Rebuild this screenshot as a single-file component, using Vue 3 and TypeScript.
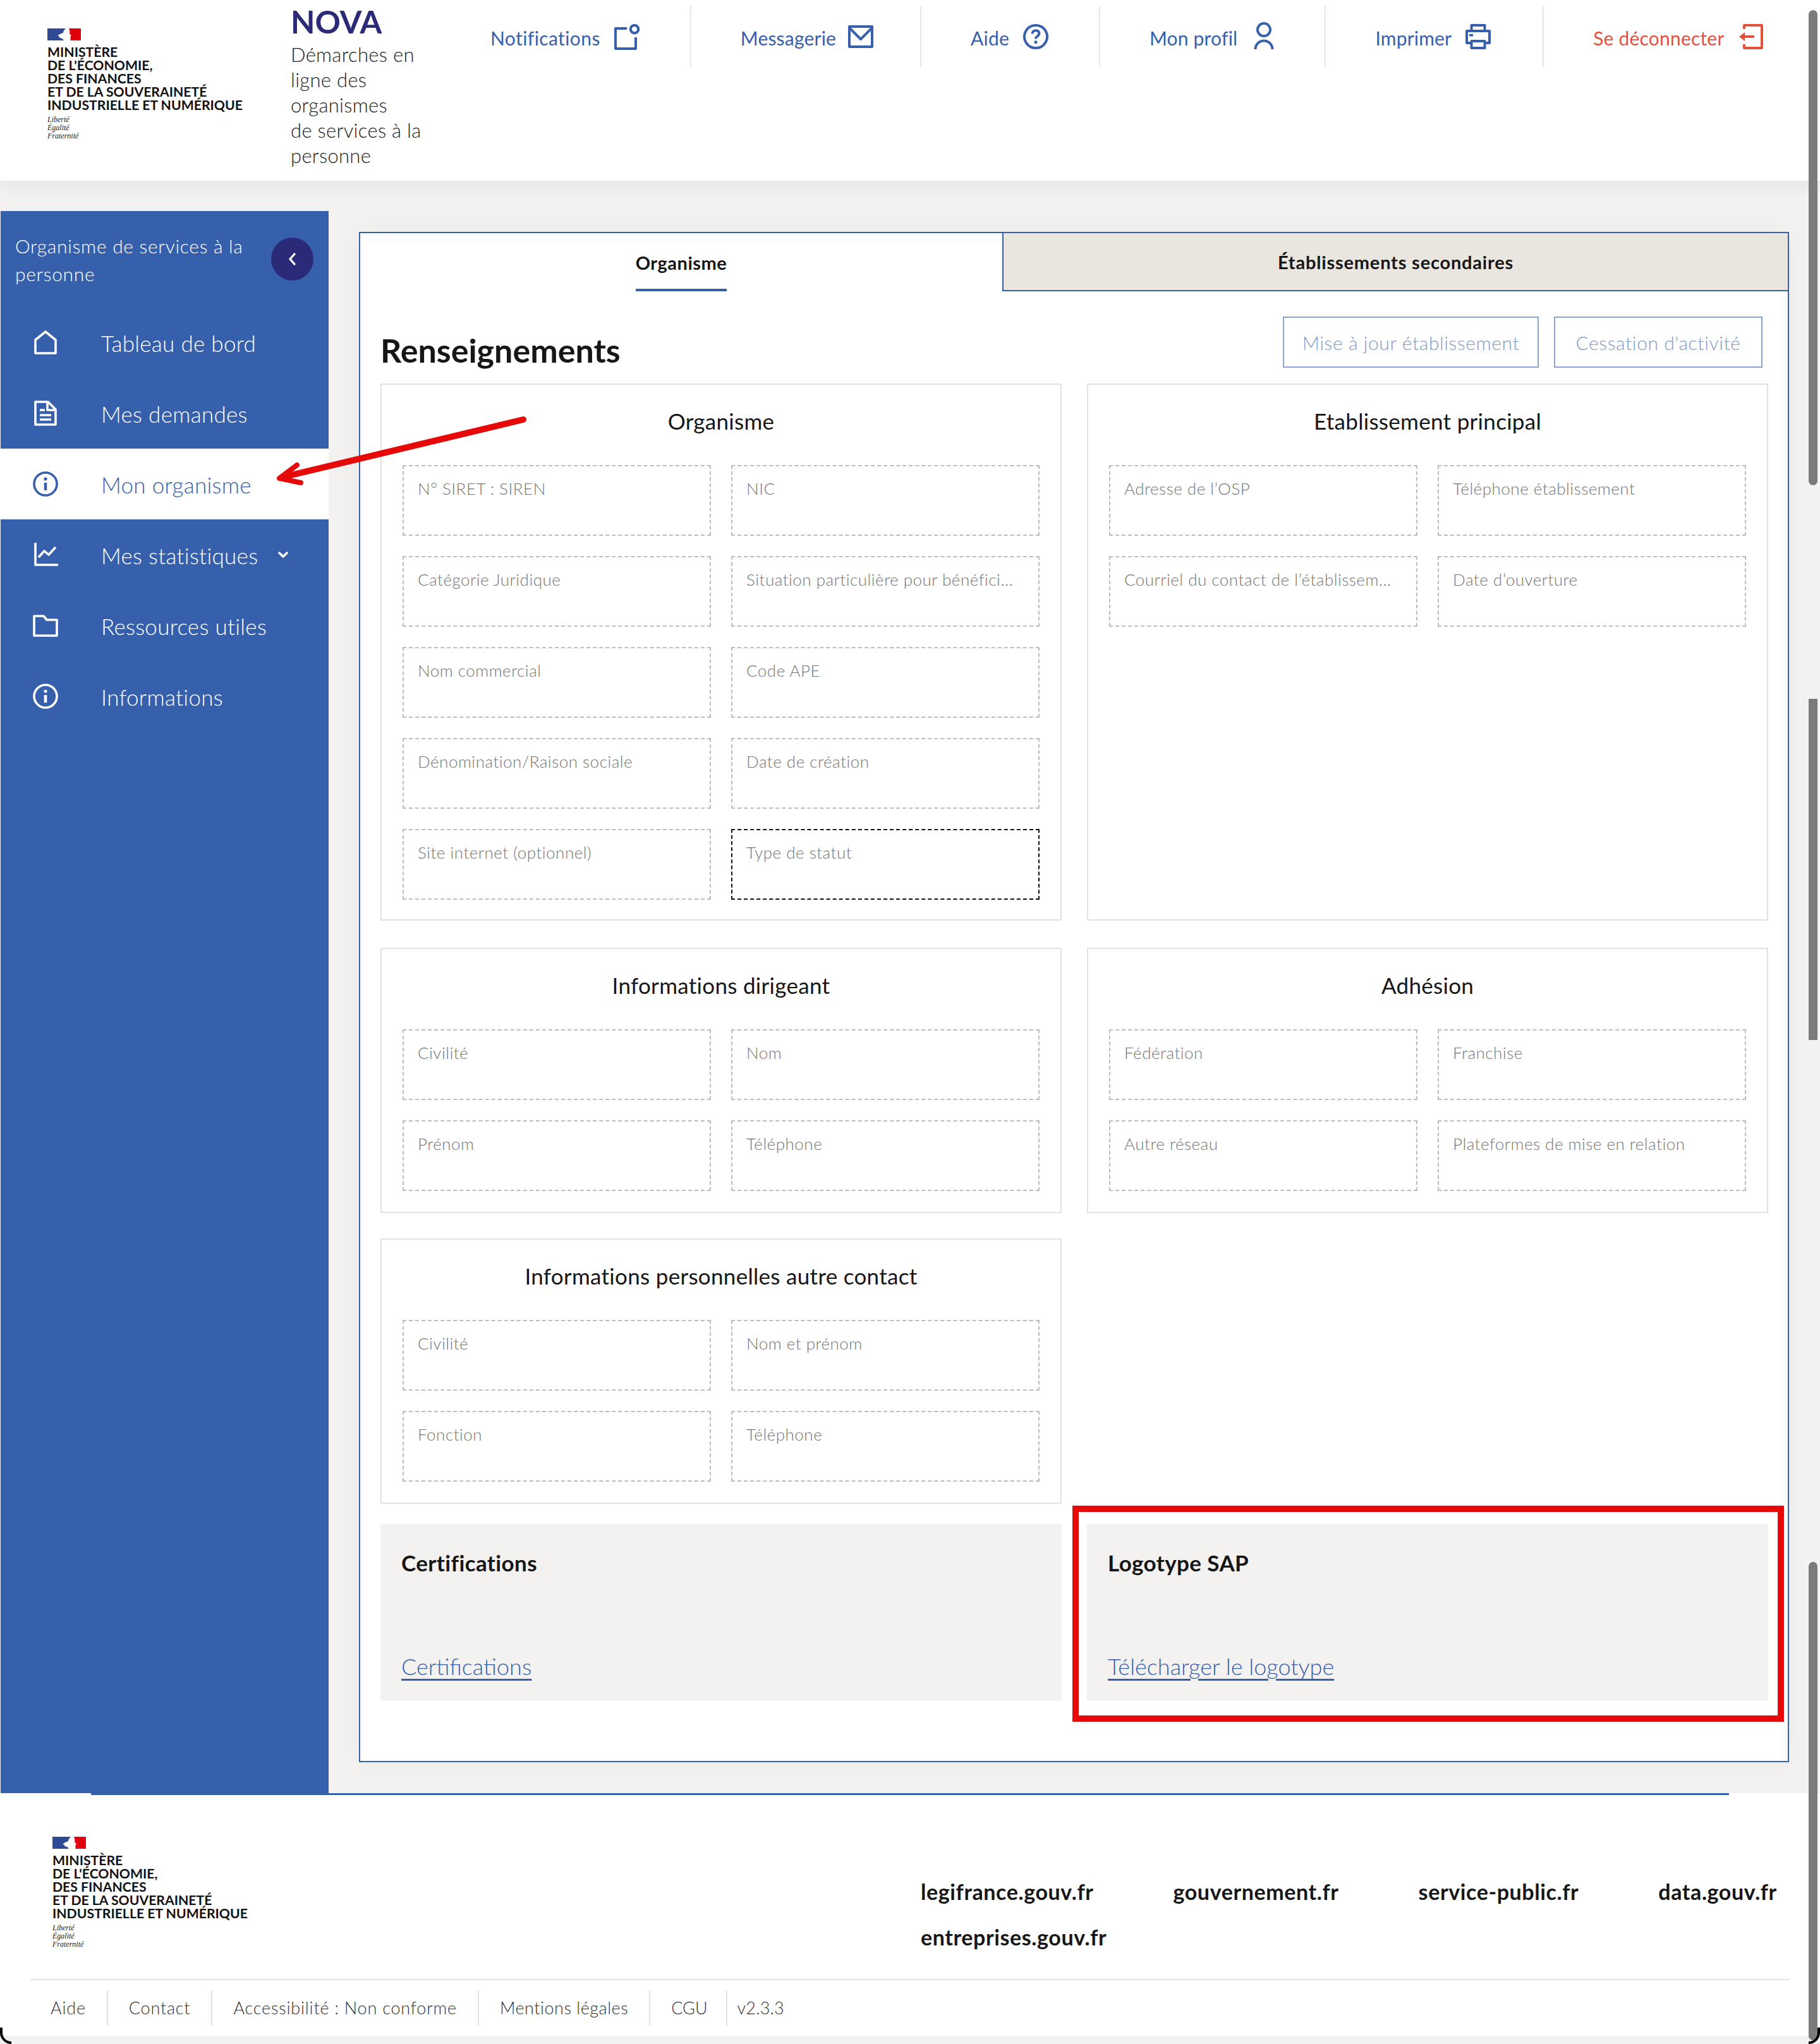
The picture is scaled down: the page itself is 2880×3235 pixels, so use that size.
<template>
  <div class="page">
    <header class="topbar">
      <div class="brand">
        <div class="gov-logo">
          <svg class="flag" viewBox="0 0 53 19"><rect width="30" height="19" fill="#2f4a94" /><path d="M29 0c-3 3-4 5-4 7-3 1-6 2-9 5 3 0 4 1 3 3 3 0 5 1 7 4h5V0z" fill="#fff" /><path d="M34 0h19v19H36c1-2 1-3 0-4l1-1-1-1 2-1-3-4c1-3 0-6-1-8z" fill="#e1000f" /></svg>
          <div class="gov-name">MINISTÈRE<br>DE L'ÉCONOMIE,<br>DES FINANCES<br>ET DE LA SOUVERAINETÉ<br>INDUSTRIELLE ET NUMÉRIQUE</div>
          <div class="motto">Liberté<br>Égalité<br>Fraternité</div>
        </div>
        <div class="app-title">
          <h1>NOVA</h1>
          <p>Démarches en<br>ligne des<br>organismes<br>de services à la<br>personne</p>
        </div>
      </div>
      <nav class="top-nav">
        <a v-for="item in topLinks" :key="item.label" class="top-link" :class="{ danger: item.danger }">
          <span>{{ item.label }}</span>
          <svg class="top-icon" viewBox="0 0 40 40" fill="none" stroke="currentColor" stroke-width="4" stroke-linejoin="round">
            <path :d="item.icon" />
            <path v-if="item.fill" :d="item.fill" fill="currentColor" stroke="none" />
          </svg>
        </a>
      </nav>
    </header>

    <div class="middle">
      <aside class="sidebar">
        <div class="side-head">
          <span>Organisme de services à la personne</span>
          <button class="collapse"><svg viewBox="0 0 24 24" width="24" height="24" fill="none" stroke="#fff" stroke-width="3.4" stroke-linecap="round" stroke-linejoin="round"><path d="M15 4l-7 8 7 8" /></svg></button>
        </div>
        <a v-for="item in sideLinks" :key="item.label" class="side-link" :class="{ active: item.active }">
          <svg class="side-icon" viewBox="0 0 40 40" fill="none" stroke="currentColor" stroke-width="3.6" stroke-linejoin="round">
            <path :d="item.icon" />
            <template v-if="item.info">
              <circle cx="20" cy="20" r="18" />
              <circle cx="20" cy="12" r="2.6" fill="currentColor" stroke="none" />
              <path d="M20 18v12" stroke-width="4.6" />
            </template>
          </svg>
          <span>{{ item.label }}</span>
          <svg v-if="item.caret" class="caret" viewBox="0 0 16 12" width="16" height="12" fill="none" stroke="#fff" stroke-width="3.4" stroke-linecap="round" stroke-linejoin="round"><path d="M2 3l6 6 6-6" /></svg>
        </a>
      </aside>

      <main class="content">
        <div class="card">
          <div class="tabs">
            <div class="tab current"><span>Organisme</span></div>
            <div class="tab other">Établissements secondaires</div>
          </div>
          <div class="card-body">
            <div class="title-row">
              <h2>Renseignements</h2>
              <div class="actions">
                <button class="ghost wide">Mise à jour établissement</button>
                <button class="ghost">Cessation d'activité</button>
              </div>
            </div>
            <div class="grid">
              <section v-for="block in blocks" :key="block.title" class="block" :class="block.cls">
                <h3>{{ block.title }}</h3>
                <div class="fields">
                  <div v-for="f in block.fields" :key="f" class="field" :class="{ focus: f === 'Type de statut' }">{{ f }}</div>
                </div>
              </section>
              <section class="doc">
                <h4>Certifications</h4>
                <a>Certifications</a>
              </section>
              <section class="doc">
                <h4>Logotype SAP</h4>
                <a>Télécharger le logotype</a>
              </section>
            </div>
          </div>
        </div>
      </main>
    </div>

    <footer class="footer">
      <div class="foot-top">
        <div class="gov-logo small">
          <svg class="flag" viewBox="0 0 53 19"><rect width="30" height="19" fill="#2f4a94" /><path d="M29 0c-3 3-4 5-4 7-3 1-6 2-9 5 3 0 4 1 3 3 3 0 5 1 7 4h5V0z" fill="#fff" /><path d="M34 0h19v19H36c1-2 1-3 0-4l1-1-1-1 2-1-3-4c1-3 0-6-1-8z" fill="#e1000f" /></svg>
          <div class="gov-name">MINISTÈRE<br>DE L'ÉCONOMIE,<br>DES FINANCES<br>ET DE LA SOUVERAINETÉ<br>INDUSTRIELLE ET NUMÉRIQUE</div>
          <div class="motto">Liberté<br>Égalité<br>Fraternité</div>
        </div>
        <div class="foot-sites">
          <a v-for="s in sites" :key="s">{{ s }}</a>
        </div>
      </div>
      <div class="foot-bottom">
        <a v-for="l in footLinks" :key="l">{{ l }}</a>
        <span class="version">v2.3.3</span>
      </div>
    </footer>

    <!-- annotations posees sur la capture -->
    <svg class="arrow" viewBox="0 0 420 116" width="420" height="116" fill="none" stroke="#e50909" stroke-linecap="round" stroke-linejoin="round">
      <path d="M408 9L28 100" stroke-width="10" />
      <path d="M50 81L22 102 56 109" stroke-width="8" />
    </svg>
    <div class="red-box"></div>
    <div class="thumb t1"></div>
    <div class="thumb t2"></div>
    <div class="thumb t3"></div>
    <div class="corner left"></div>
    <div class="corner right"></div>
  </div>
</template>

<script setup lang="ts">
const topLinks = [
  { label: 'Notifications', icon: 'M20 7H2v32h32V21M32 2a6.2 6.2 0 1 0 .01 0' },
  { label: 'Messagerie', icon: 'M2 4h36v32H2zM2 6l18 18L38 6' },
  { label: 'Aide', icon: 'M20 2a18 18 0 1 0 .01 0M14.5 15.5c0-7 11-7 11-.5 0 4-5.500 4-5.500 8.500', fill: 'M17.800 26.500h4.400v4.400h-4.400z' },
  { label: 'Mon profil', icon: 'M20 -1a10 10 0 1 0 .01 0M6.500 40a13.500 13.500 0 0 1 27 0' },
  { label: 'Imprimer', icon: 'M9.500 11V2h21v9M9.500 30H2V11h36v19h-7.500M9.500 27h21v11h-21z', fill: 'M6 16h6v3.500H6z' },
  { label: 'Se déconnecter', icon: 'M9 8V2h28v36H9v-6M9 20h16', fill: 'M1 20l9-7v14z', danger: true }
]

const sideLinks = [
  { label: 'Tableau de bord', icon: 'M4 37V16L20 3l16 13v21z' },
  { label: 'Mes demandes', icon: 'M4 2h20l12 12v24H4zM23 2v13h13M11 15h8M11 23h18M11 30h18' },
  { label: 'Mon organisme', icon: '', info: true, active: true },
  { label: 'Mes statistiques', icon: 'M4 1v35h36M9 24l9-10 7 6 11-12', caret: true },
  { label: 'Ressources utiles', icon: 'M2 36V5h15l5 6h16v25z' },
  { label: 'Informations', icon: '', info: true }
]

const blocks = [
  {
    title: 'Organisme',
    cls: 'tall',
    fields: ['N° SIRET : SIREN', 'NIC', 'Catégorie Juridique', 'Situation particulière pour bénéfici...', 'Nom commercial', 'Code APE', 'Dénomination/Raison sociale', 'Date de création', 'Site internet (optionnel)', 'Type de statut']
  },
  {
    title: 'Etablissement principal',
    cls: 'tall',
    fields: ['Adresse de l’OSP', 'Téléphone établissement', 'Courriel du contact de l’établissem...', 'Date d’ouverture']
  },
  { title: 'Informations dirigeant', cls: '', fields: ['Civilité', 'Nom', 'Prénom', 'Téléphone'] },
  { title: 'Adhésion', cls: '', fields: ['Fédération', 'Franchise', 'Autre réseau', 'Plateformes de mise en relation'] },
  { title: 'Informations personnelles autre contact', cls: 'lone', fields: ['Civilité', 'Nom et prénom', 'Fonction', 'Téléphone'] }
]

const sites = ['legifrance.gouv.fr', 'gouvernement.fr', 'service-public.fr', 'data.gouv.fr', 'entreprises.gouv.fr']
const footLinks = ['Aide', 'Contact', 'Accessibilité : Non conforme', 'Mentions légales', 'CGU']
</script>

<style>
html, body { margin: 0; background: #f3f2f1; }
</style>

<style scoped>
.page {
  position: relative;
  width: 2880px;
  height: 3235px;
  overflow: hidden;
  display: flex;
  flex-direction: column;
  font-family: Lato, "Open Sans", sans-serif;
  font-weight: 300;
  color: #161616;
  background: #f3f2f1;
}
a { display: block; }

.topbar {
  height: 286px;
  flex: none;
  display: flex;
  background: #fff;
  box-shadow: 0 4px 30px rgba(0, 0, 0, 0.08);
  position: relative;
  z-index: 1;
}
.brand { display: flex; width: 776px; flex: none; }
.gov-logo { padding: 45px 0 0 75px; width: 460px; box-sizing: border-box; flex: none; }
.flag { display: block; width: 53px; height: 19px; margin-bottom: 8px; }
.gov-name {
  font-weight: 700;
  font-size: 21.2px;
  line-height: 21px;
  color: #111;
  white-space: nowrap;
}
.motto {
  margin-top: 6px;
  font-family: "Liberation Serif", serif;
  font-style: italic;
  font-size: 12px;
  line-height: 13px;
  color: #222;
}
.app-title h1 {
  margin: 6px 0 0;
  font-size: 50px;
  line-height: 56px;
  font-weight: 700;
  color: #2a2a78;
}
.app-title p {
  margin: 4px 0 0;
  font-size: 31px;
  letter-spacing: 0.3px;
  line-height: 40px;
  color: #222;
}
.top-nav {
  display: flex;
  padding-top: 10px;
  height: 96px;
}
.top-link {
  display: flex;
  align-items: flex-start;
  gap: 22px;
  height: 96px;
  box-sizing: border-box;
  padding: 30px 76px 0 78px;
  color: #3760ac;
  font-size: 30px;
  font-weight: 400;
  letter-spacing: 0.2px;
  line-height: 40px;
  border-right: 2px solid #e6e6e6;
}
.top-link:first-child { padding-left: 0; padding-right: 80px; letter-spacing: 0.4px; }
.top-link:nth-child(2) { gap: 19px; padding-right: 74px; }
.top-link:nth-child(3) { padding-right: 80px; }
.top-link:nth-child(5) { padding-right: 82px; }
.top-link:last-child { border-right: none; }
.top-link.danger { color: #e1523d; }
.top-icon { width: 40px; height: 40px; flex: none; margin-top: -2px; overflow: visible; }

.middle { flex: 1; display: flex; min-height: 0; }
.sidebar {
  width: 519px;
  margin: 48px 0 0 1px;
  background: #3760ac;
  color: #fff;
  flex: none;
}
.side-head {
  height: 152px;
  box-sizing: border-box;
  padding: 33px 24px 0 23px;
  display: flex;
  gap: 30px;
  font-size: 30px;
  letter-spacing: 0.7px;
  line-height: 44px;
}
.side-head span { flex: 1; }
.collapse {
  width: 67px;
  height: 68px;
  margin-top: 9px;
  flex: none;
  border: none;
  border-radius: 50%;
  background: #2a2a78;
  display: flex;
  align-items: center;
  justify-content: center;
  padding: 0;
}
.side-link {
  height: 112px;
  display: flex;
  align-items: center;
  padding-left: 51px;
  font-size: 35px;
  letter-spacing: 0.3px;
  position: relative;
}
.side-link span { position: relative; top: 1px; }
.side-link.active { background: #fff; color: #3760ac; margin-left: -1px; padding-left: 52px; }
.side-icon { width: 40px; height: 40px; margin-right: 68px; flex: none; }
.caret { position: absolute; left: 439px; top: 50px; }

.content { flex: 1; padding: 81px 49px 49px 48px; min-width: 0; }
.card {
  height: 2422px;
  background: #fff;
  border: 2px solid #3760ac;
  box-sizing: border-box;
  box-shadow: 0 0 40px rgba(0, 0, 0, 0.04);
}
.tabs { display: flex; height: 92px; }
.tab { display: flex; align-items: center; justify-content: center; font-size: 29px; font-weight: 700; box-sizing: border-box; }
.tab.current { width: 1016px; align-items: stretch; letter-spacing: 0.5px; }
.tab.current span { display: flex; align-items: center; border-bottom: 4px solid #3760ac; padding-top: 4px; box-sizing: border-box; }
.tab.other { flex: 1; background: #e9e5df; border-left: 2px solid #3760ac; border-bottom: 2px solid #3760ac; letter-spacing: 0.8px; }
.card-body { padding: 0 32px; }
.title-row {
  height: 146px;
  display: flex;
  justify-content: space-between;
  align-items: flex-end;
}
.title-row h2 { margin: 0 0 23px 0; font-size: 52px; line-height: 60px; font-weight: 700; }
.actions { display: flex; gap: 24px; padding-bottom: 25px; margin-right: 8px; }
.ghost {
  height: 81px;
  width: 330px;
  box-sizing: border-box;
  background: #fff;
  border: 2px solid #8ba4d2;
  color: #7e9ac9;
  font: inherit;
  font-size: 30px;
  letter-spacing: 0.6px;
  padding: 0;
}
.ghost.wide { width: 405px; }
.grid {
  display: grid;
  grid-template-columns: 1078px 1078px;
  column-gap: 40px;
  row-gap: 43px;
  align-items: start;
}
.block {
  box-sizing: border-box;
  border: 2px solid #e2e2e2;
  padding: 0 33px 33px;
}
.block.tall { height: 850px; }
.block.lone { grid-column: 1; margin-top: -3px; }
.block h3 {
  margin: 0;
  height: 127px;
  display: flex;
  align-items: center;
  justify-content: center;
  font-size: 35px;
  letter-spacing: 0.3px;
  font-weight: 400;
  padding-bottom: 14px;
  box-sizing: border-box;
}
.fields { display: grid; grid-template-columns: 1fr 1fr; column-gap: 32px; row-gap: 32px; }
.field {
  height: 112px;
  box-sizing: border-box;
  border: 2px dashed #bdbdbd;
  padding: 19px 22px 0;
  font-size: 26px;
  letter-spacing: 0.5px;
  line-height: 32px;
  color: #757575;
  min-width: 0;
  white-space: nowrap;
}
.field.focus { border-color: #111; }
.doc {
  grid-row: 4;
  height: 280px;
  background: #f3f2f1;
  margin-top: -11px;
  padding: 40px 33px 0;
  box-sizing: border-box;
}
.doc h4 { margin: 0; font-size: 35px; letter-spacing: 0.4px; line-height: 42px; font-weight: 700; }
.doc a {
  display: inline-block;
  margin-top: 123px;
  color: #3760ac;
  font-size: 36px;
  line-height: 40px;
  text-decoration: underline;
  text-underline-offset: 6px;
}

.footer {
  height: 384px;
  margin-bottom: 13px;
  flex: none;
  box-sizing: border-box;
  background: #fff;
  position: relative;
  display: flex;
  flex-direction: column;
}
.footer::before {
  content: "";
  position: absolute;
  top: 0;
  left: 144px;
  width: 2592px;
  height: 3px;
  background: #3760ac;
}
.foot-top { height: 294px; display: flex; border-bottom: 2px solid #e2e2e2; margin: 0 48px; }
.gov-logo.small { padding: 69px 0 0 35px; width: 1409px; flex: none; }
.foot-sites {
  padding-top: 136px;
  display: flex;
  flex-wrap: wrap;
  column-gap: 126px;
  row-gap: 32px;
  width: 1400px;
  align-content: flex-start;
  font-size: 34px;
  letter-spacing: 0.6px;
  line-height: 40px;
  font-weight: 700;
}
.foot-bottom {
  display: flex;
  align-items: center;
  height: 56px;
  margin: 16px 0 0 48px;
  font-size: 27px;
  letter-spacing: 0.8px;
  color: #333;
}
.foot-bottom a, .version { padding: 0 33px; line-height: 56px; border-right: 2px solid #e2e2e2; }
.foot-bottom a:first-child { padding-left: 32px; }
.foot-bottom a:nth-child(4) { letter-spacing: 0.5px; }
.foot-bottom a:nth-child(5) { letter-spacing: 0; padding-right: 29px; }
.version { border-right: none; padding: 0 16px; letter-spacing: 0.2px; }

.arrow { position: absolute; left: 420px; top: 655px; z-index: 3; }
.red-box {
  position: absolute;
  left: 1697px;
  top: 2383px;
  width: 1126px;
  height: 342px;
  box-sizing: border-box;
  border: 10px solid #e50909;
  z-index: 3;
}
.thumb { position: absolute; left: 2862px; width: 14px; background: #7b7b79; z-index: 4; }
.t1 { top: 16px; height: 752px; border-radius: 7px; }
.t2 { top: 1106px; height: 540px; }
.t3 { top: 2472px; height: 757px; border-radius: 7px; }
.corner { position: absolute; bottom: 0; width: 18px; height: 26px; border-bottom: 4px solid #000; z-index: 5; box-sizing: border-box; }
.corner.left { left: 0; border-left: 4px solid #000; border-bottom-left-radius: 18px; }
.corner.right { right: 0; border-right: 4px solid #000; border-bottom-right-radius: 18px; }
</style>
